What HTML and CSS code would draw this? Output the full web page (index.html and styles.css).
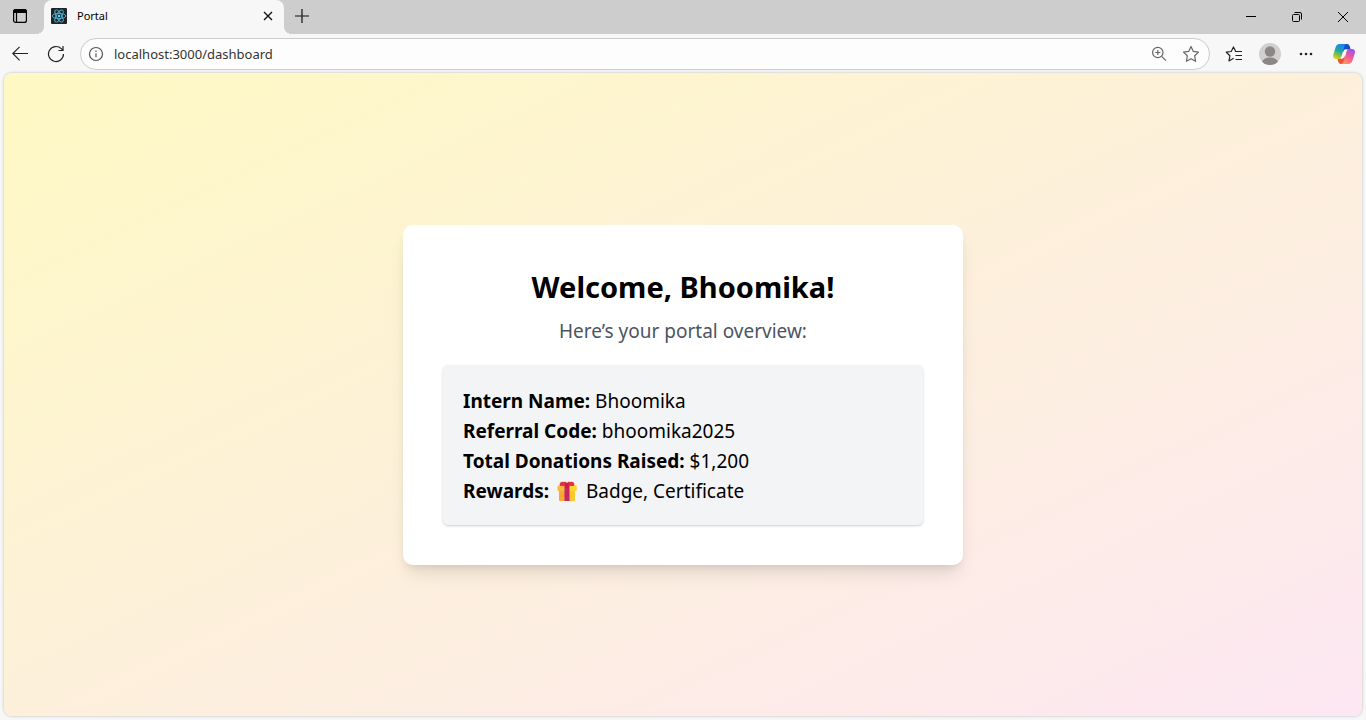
FILE: index.html
```html
<!DOCTYPE html>
<html lang="en">
<head>
<meta charset="utf-8">
<meta name="viewport" content="width=device-width, initial-scale=1">
<title>Portal</title>
<link rel="stylesheet" href="styles.css">
</head>
<body class="browser">
<header class="chrome">
  <div class="tabbar">
    <button class="workspace" aria-label="Tab actions">
      <svg width="16" height="16" viewBox="0 0 16 16" fill="none" stroke="#000" stroke-width="1.2"><rect x="1.600" y="1.600" width="12.800" height="12.800" rx="2"/><path d="M4.500 5v9"/><path d="M1.600 3.900c0-1.400.8-2.300 2-2.300h8.800c1.200 0 2 .9 2 2.300v.6H1.600z" fill="#000"/></svg>
    </button>
    <div class="tab">
      <svg class="favicon" width="16" height="16" viewBox="0 0 16 16"><rect width="16" height="16" rx="1" fill="#20232a"/><g fill="none" stroke="#50b4d0" stroke-width=".9"><ellipse cx="8" cy="8" rx="6.800" ry="2.600"/><ellipse cx="8" cy="8" rx="6.800" ry="2.600" transform="rotate(60 8 8)"/><ellipse cx="8" cy="8" rx="6.800" ry="2.600" transform="rotate(120 8 8)"/></g><circle cx="8" cy="8" r="1.300" fill="#61dafb"/></svg>
      <span class="tab-title">Portal</span>
      <button class="tab-close" aria-label="Close tab"><svg width="10" height="10" viewBox="0 0 10 10" stroke="#111" stroke-width="1.400"><path d="M1 1l8 8M9 1L1 9"/></svg></button>
    </div>
    <button class="new-tab" aria-label="New tab"><svg width="14" height="14" viewBox="0 0 14 14" stroke="#111" stroke-width="1.200"><path d="M7 0v14M0 7h14"/></svg></button>
    <div class="window-controls">
      <button aria-label="Minimize"><svg width="10" height="10" viewBox="0 0 10 10" stroke="#000"><path d="M0 4.500h10"/></svg></button>
      <button aria-label="Restore"><svg width="10" height="10" viewBox="0 0 10 10" fill="none" stroke="#000"><rect x=".5" y="2.500" width="7" height="7" rx="1"/><path d="M2.500.5H8A1.500 1.500 0 0 1 9.500 2v5.500"/></svg></button>
      <button aria-label="Close window"><svg width="12" height="12" viewBox="0 0 12 12" stroke="#000"><path d="M1 1l10 10M11 1L1 11"/></svg></button>
    </div>
  </div>
  <div class="toolbar">
    <button class="nav-button" aria-label="Back"><svg width="16" height="16" viewBox="0 0 16 16" fill="none" stroke="#222" stroke-width="1.100"><path d="M16 7.500H.8M7.600.8L.8 7.500l6.800 6.800"/></svg></button>
    <button class="nav-button" aria-label="Refresh"><svg width="18" height="18" viewBox="0 0 18 18" fill="none" stroke="#222" stroke-width="1.200"><path d="M16.500 9A7.500 7.500 0 1 1 14.300 3.700L15.800 5.200"/><path d="M16 1v4.500h-4.500"/></svg></button>
    <div class="address">
      <svg width="16" height="16" viewBox="0 0 16 16" fill="none" stroke="#555" stroke-width="1.200"><circle cx="8" cy="8" r="6.500"/><path d="M8 7.300v4M8 4.500v1.400"/></svg>
      <input class="url" type="text" aria-label="Address" value="localhost:3000/dashboard">
      <button aria-label="Zoom"><svg width="16" height="16" viewBox="0 0 16 16" fill="none" stroke="#666" stroke-width="1.200"><circle cx="6.800" cy="6.500" r="5.200"/><path d="M10.600 10.300l4.400 4.400M6.800 3.900v5.200M4.200 6.500h5.200"/></svg></button>
      <button aria-label="Add to favorites"><svg width="18" height="18" viewBox="0 0 18 18" fill="none" stroke="#666" stroke-width="1.200" stroke-linejoin="round"><path d="M9 1.500l2.300 4.900 5.200.7-3.800 3.700.9 5.500L9 13.700l-4.600 2.600.9-5.500-3.800-3.700 5.200-.7z"/></svg></button>
    </div>
    <div class="actions">
      <button aria-label="Favorites"><svg width="18" height="18" viewBox="0 0 18 18" fill="none" stroke="#222" stroke-width="1.200" stroke-linejoin="round"><path d="M8.600 13.300L4 15.900l.9-5.200L1.300 7.200l4.900-.7L8.500 2l2.200 4.500H17M10.500 10.500H17M10.500 14.500H17"/></svg></button>
      <button aria-label="Profile"><svg width="22" height="22" viewBox="0 0 22 22"><defs><clipPath id="avatar"><circle cx="11" cy="11" r="11"/></clipPath></defs><g clip-path="url(#avatar)"><rect width="22" height="22" fill="#d2d0ce"/><circle cx="11" cy="8.500" r="5.200" fill="#8a8784"/><ellipse cx="11" cy="19.500" rx="8" ry="5" fill="#8a8784"/></g></svg></button>
      <button aria-label="Settings and more"><svg width="14" height="4" viewBox="0 0 14 4" fill="#222"><circle cx="2" cy="2" r="1.300"/><circle cx="7" cy="2" r="1.300"/><circle cx="12" cy="2" r="1.300"/></svg></button>
      <button class="copilot" aria-label="Copilot"><svg width="22" height="20" viewBox="0 0 22 20"><defs><linearGradient id="cool" x1=".6" y1="0" x2=".2" y2="1"><stop offset="0" stop-color="#1b86f0"/><stop offset=".45" stop-color="#1fa6a6"/><stop offset=".75" stop-color="#8fc43c"/><stop offset="1" stop-color="#f5cf16"/></linearGradient><linearGradient id="warm" x1=".8" y1="0" x2=".3" y2="1"><stop offset="0" stop-color="#9a4df0"/><stop offset=".5" stop-color="#ee5a9b"/><stop offset="1" stop-color="#ff9a5a"/></linearGradient></defs><path d="M10 0h4c2 0 2.500 1.500 3 3l.6 2.500h-4.100c-2 0-2.800 1-3.300 3z" fill="#174bd0"/><path d="M12 20H8c-2 0-2.500-1.500-3-3l-.6-2.500h4.100c2 0 2.800-1 3.300-3z" fill="#ee5537"/><path d="M6.500 0H14c-1.500 0-2.200 1-2.700 2.700L8.600 12c-.6 2-1.400 3-3.300 3H3c-2.500 0-3.400-2-2.700-4.500l2.200-7C3.200 1.400 4.400 0 6.500 0z" fill="url(#cool)"/><path d="M15.500 20H8c1.500 0 2.200-1 2.700-2.700L13.400 8c.6-2 1.400-3 3.300-3H19c2.500 0 3.400 2 2.700 4.500l-2.200 7c-.7 2.100-1.900 3.500-4 3.500z" fill="url(#warm)"/><path d="M11.500 5.500h2.700c-1.200.7-1.700 1.800-2 3l-1.500 4.600c-.3.900-.8 1.400-1.600 1.400H7.700c1-.6 1.500-1.600 1.800-2.700z" fill="#fafafa"/></svg></button>
    </div>
  </div>
</header>
<main class="page">
  <section class="card">
    <h1 class="title">Welcome, Bhoomika!</h1>
    <p class="subtitle">Here’s your portal overview:</p>
    <div class="details">
      <p><strong>Intern Name:</strong> Bhoomika</p>
      <p><strong>Referral Code:</strong> bhoomika2025</p>
      <p><strong>Total Donations Raised:</strong> $1,200</p>
      <p><strong>Rewards:</strong> <svg class="gift" width="20" height="20" viewBox="0 0 20 20" role="img" aria-label="Gift"><rect x="2" y="8" width="16" height="12" rx="1" fill="#f9a92f"/><path d="M10 8h8v11a1 1 0 0 1-1 1h-7z" fill="#fcc82b"/><rect x=".5" y="4.500" width="19" height="5.500" rx="1" fill="#f9b83c"/><path d="M10 4.500h8.500a1 1 0 0 1 1 1V9a1 1 0 0 1-1 1H10z" fill="#ffd52e"/><rect x="7.500" y="4" width="5" height="16" fill="#c52566"/><path d="M10 5H4C2.300 5 2.200 2.500 3.500 1.500 5 .2 6 1.300 7 1c1.500-.8 2.300 0 3 1 .7-1 1.500-1.800 3-1 1 .3 2-.8 3.500.5 1.300 1 1.200 3.500-.5 3.500z" fill="#e2323f"/><path d="M8 2h4v5H8z" fill="#c91f48"/></svg> Badge, Certificate</p>
    </div>
  </section>
</main>
</body>
</html>
```
FILE: styles.css
```css
* { box-sizing: border-box; }

.browser {
  margin: 0;
  min-height: 100vh;
  display: flex;
  flex-direction: column;
  background: #f7f7f7;
  color: #000;
  font-family: "Noto Sans", "Open Sans", sans-serif;
}

button {
  display: flex;
  align-items: center;
  justify-content: center;
  padding: 0;
  border: 0;
  background: none;
}

svg { flex: none; }

.tabbar {
  display: flex;
  height: 34px;
  background: #cdcdcd;
}

.workspace {
  width: 44px;
  padding: 0 4px 2px 0;
}

.tab {
  position: relative;
  display: flex;
  align-items: center;
  width: 240px;
  padding: 0 10px 2px 7px;
  gap: 10px;
  background: #f7f7f7;
  border-radius: 8px 8px 0 0;
}

/* Curved feet that join the active tab to the toolbar */
.tab::before,
.tab::after {
  content: "";
  position: absolute;
  bottom: 0;
  width: 8px;
  height: 8px;
}

.tab::before {
  right: 100%;
  background: radial-gradient(circle at 0 0, #cdcdcd 8px, #f7f7f7 8px);
}

.tab::after {
  left: 100%;
  background: radial-gradient(circle at 100% 0, #cdcdcd 8px, #f7f7f7 8px);
}

.tab-title {
  flex: 1;
  font-size: 11px;
  line-height: 16px;
}

.tab-close { width: 12px; height: 16px; }

.new-tab {
  width: 35px;
  padding-bottom: 2px;
}

.window-controls {
  display: flex;
  margin-left: auto;
}

.window-controls button { width: 46px; }

.toolbar {
  display: flex;
  align-items: center;
  height: 39px;
  padding: 0 7px 0 2px;
}

.nav-button {
  width: 36px;
  height: 32px;
}

.address {
  flex: 1;
  display: flex;
  align-items: center;
  gap: 10px;
  height: 32px;
  margin: 0 11px 0 6px;
  padding: 0 7px;
  border: 1px solid #cccccc;
  border-radius: 16px;
  background: #fdfdfd;
}

.address button { width: 22px; height: 24px; }

.url {
  flex: 1;
  min-width: 0;
  padding: 0;
  border: 0;
  background: none;
  color: #333;
  font-family: inherit;
  font-size: 13px;
}

.actions {
  display: flex;
  align-items: center;
  gap: 10px;
}

.actions button { width: 26px; height: 28px; }

.actions .copilot { width: 30px; }

.page {
  flex: 1;
  display: flex;
  align-items: center;
  justify-content: center;
  margin: 0 4px 4px;
  border-radius: 8px;
  background: linear-gradient(to bottom right, #fef9c3, #fce7f3);
  box-shadow: 0 0 3px rgba(0, 0, 0, 0.25);
}

.card {
  width: 100%;
  max-width: 560px;
  padding: 42px 40px 40px;
  border-radius: 10px;
  background: #fff;
  box-shadow: 0 12px 18px -4px rgba(0, 0, 0, 0.1), 0 5px 8px -4px rgba(0, 0, 0, 0.1);
}

.title {
  margin: 0 0 9px;
  font-size: 29px;
  line-height: 40px;
  font-weight: 700;
  text-align: center;
}

.subtitle {
  margin: 0 0 19px;
  color: #4b5563;
  font-size: 19px;
  line-height: 30px;
  text-align: center;
}

.details {
  padding: 21px 20px 19px;
  border-radius: 5px;
  background: #f3f4f6;
  box-shadow: 0 1px 3px rgba(0, 0, 0, 0.1), 0 1px 2px rgba(0, 0, 0, 0.1);
  font-size: 19px;
  line-height: 30px;
}

.details p { margin: 0; }

.gift {
  margin: 0 4px 0 3px;
  vertical-align: -3px;
}
```
